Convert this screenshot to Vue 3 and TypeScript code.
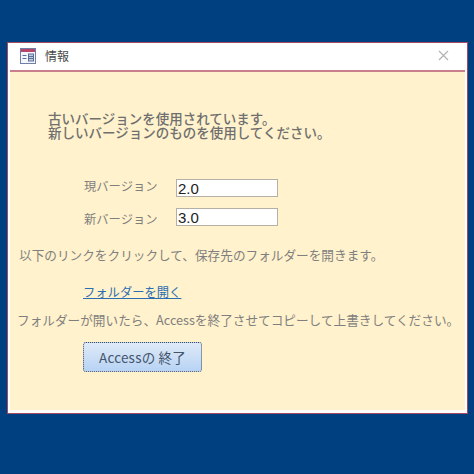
<script setup lang="ts">
const labels = ['現バージョン', '新バージョン']
const values = ['2.0', '3.0']
</script>

<template>
  <div class="desktop">
    <div class="window">
      <div class="titlebar">
        <svg class="icon" width="16" height="16" viewBox="0 0 16 16">
          <rect x="0.5" y="0.5" width="15" height="15" fill="#f4f6fb" stroke="#6f7fa6" />
          <rect x="1" y="1" width="14" height="3" fill="#b5476a" />
          <rect x="2.5" y="7" width="4" height="1" fill="#5b6f96" />
          <rect x="2.5" y="10" width="4" height="1" fill="#5b6f96" />
          <rect x="8.5" y="6" width="5" height="7" fill="#c3cde0" stroke="#5b6f96" />
          <path d="M8.5 8.5h5M8.5 10.5h5" stroke="#5b6f96" />
        </svg>
        <span class="title">情報</span>
        <svg class="close" width="11" height="11" viewBox="0 0 11 11">
          <path d="M1 1l9 9M10 1l-9 9" stroke="#b4b4b4" stroke-width="1.3" fill="none" />
        </svg>
      </div>
      <div class="content">
        <p class="heading">古いバージョンを使用されています。<br />新しいバージョンのものを使用してください。</p>
        <div class="versions">
          <div class="labels">
            <span v-for="l in labels" :key="l" class="label">{{ l }}</span>
          </div>
          <div class="fields">
            <input v-for="v in values" :key="v" class="field" :value="v" readonly />
          </div>
        </div>
        <p class="note first">以下のリンクをクリックして、保存先のフォルダーを開きます。</p>
        <a class="link" href="#">フォルダーを開く</a>
        <p class="note second">フォルダーが開いたら、Accessを終了させてコピーして上書きしてください。</p>
        <button class="quit" type="button">Accessの 終了</button>
      </div>
    </div>
  </div>
</template>

<style>
html, body { margin: 0; background: #003f80; }
</style>

<style scoped>
.desktop {
  width: 474px;
  height: 474px;
  box-sizing: border-box;
  padding: 42px 6px 60px 7px;
  background: #003f80;
  font-family: "Noto Sans CJK JP", "Liberation Sans", sans-serif;
}
.window {
  height: 372px;
  box-sizing: border-box;
  border: 1px solid #a34a63;
  background: #fff;
  padding: 0 2px 3px 2px;
  display: flex;
  flex-direction: column;
}
.titlebar {
  flex: none;
  display: flex;
  align-items: center;
  padding: 0 16px 2px 10px;
  box-sizing: border-box;
  border-bottom: 2px solid #c9808c;
  height: 29px;
}
.icon { flex: none; }
.title {
  margin-left: 9px;
  font-size: 12px;
  color: #4a4a4a;
}
.close { margin-left: auto; }
.content {
  flex: 1;
  background: #fff2cc;
  color: #7f7f7f;
  padding-top: 39px;
  font-size: 12.3px;
}
.heading {
  margin: 0 0 0 38px;
  font-size: 13.5px;
  line-height: 14px;
  color: #6f6f6f;
  font-weight: 500;
  white-space: nowrap;
}
.versions {
  margin: 33px 0 0 74px;
  display: flex;
  align-items: flex-start;
}
.labels {
  width: 92px;
  flex: none;
  display: flex;
  flex-direction: column;
  gap: 15px;
  padding-top: 5px;
}
.label {
  line-height: 18px;
  color: #7f7f7f;
}
.fields {
  display: flex;
  flex-direction: column;
  gap: 11px;
  padding-top: 7px;
}
.field {
  width: 102px;
  height: 18px;
  box-sizing: border-box;
  border: 1px solid #b4b0a6;
  background: #fff;
  padding: 0 1px;
  font-family: "Liberation Sans", sans-serif;
  font-size: 15px;
  color: #222;
  outline: none;
}
.note {
  margin: 0;
  line-height: 18px;
  white-space: nowrap;
  font-size: 12.65px;
}
.first { margin: 18px 0 0 9px; }
.link {
  display: inline-block;
  margin: 19px 0 0 73px;
  line-height: 18px;
  color: #2a6db0;
  font-size: 12.3px;
}
.second { margin: 10px 0 0 7px; }
.quit {
  display: block;
  margin: 13px 0 0 73px;
  width: 119px;
  height: 30px;
  border: 1px dotted #3e4c62;
  border-radius: 3px;
  background: linear-gradient(#dfeaf8, #b7d3f4);
  color: #44546a;
  font-family: "Noto Sans CJK JP", "Liberation Sans", sans-serif;
  font-size: 13.5px;
  letter-spacing: 0.2px;
  padding: 0;
}
</style>
